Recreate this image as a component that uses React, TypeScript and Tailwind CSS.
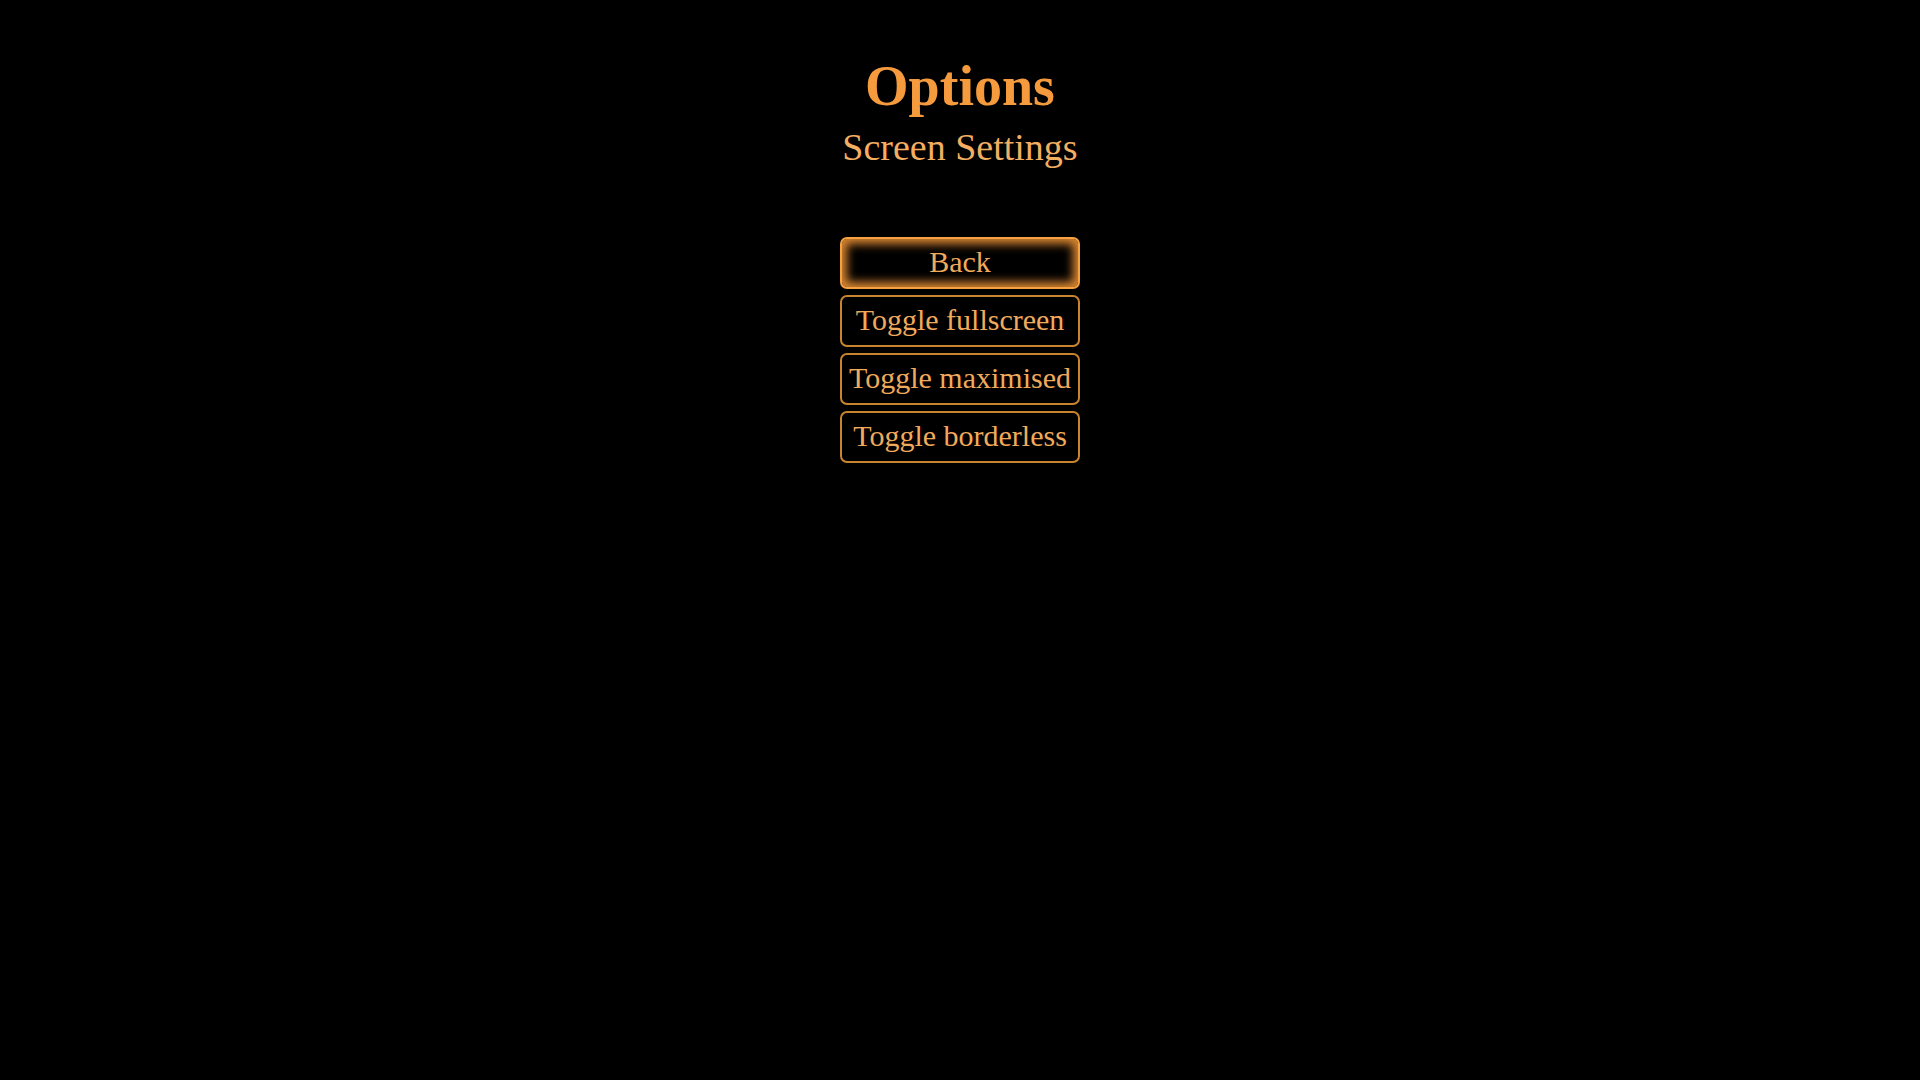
import React from "react";

const serif = { fontFamily: '"Liberation Serif", "Times New Roman", serif' };

export default function App() {
  const items = ["Toggle fullscreen", "Toggle maximised", "Toggle borderless"];
  return (
    <div className="w-[1920px] h-[1080px] bg-black flex flex-col items-center pt-[58px]" style={serif}>
      <h1 className="text-[56px] leading-[56px] font-bold text-[#f59b3e]">Options</h1>
      <h2 className="mt-[14px] text-[38px] leading-[38px] text-[#f3ae62]">Screen Settings</h2>
      <div className="mt-[71px] flex flex-col gap-[6px]">
        <button className="w-[240px] h-[52px] rounded-[7px] border-2 border-[#f7a142] bg-black shadow-[inset_0_0_10px_5px_#d98630] text-[30px] leading-[45px] pb-[3px] text-[#f1aa5c]">
          Back
        </button>
        {items.map((t) => (
          <button
            key={t}
            className="w-[240px] h-[52px] rounded-[7px] border-2 border-[#c98430] bg-black text-[30px] leading-[45px] pb-[3px] text-[#f1aa5c] whitespace-nowrap"
          >
            {t}
          </button>
        ))}
      </div>
    </div>
  );
}
